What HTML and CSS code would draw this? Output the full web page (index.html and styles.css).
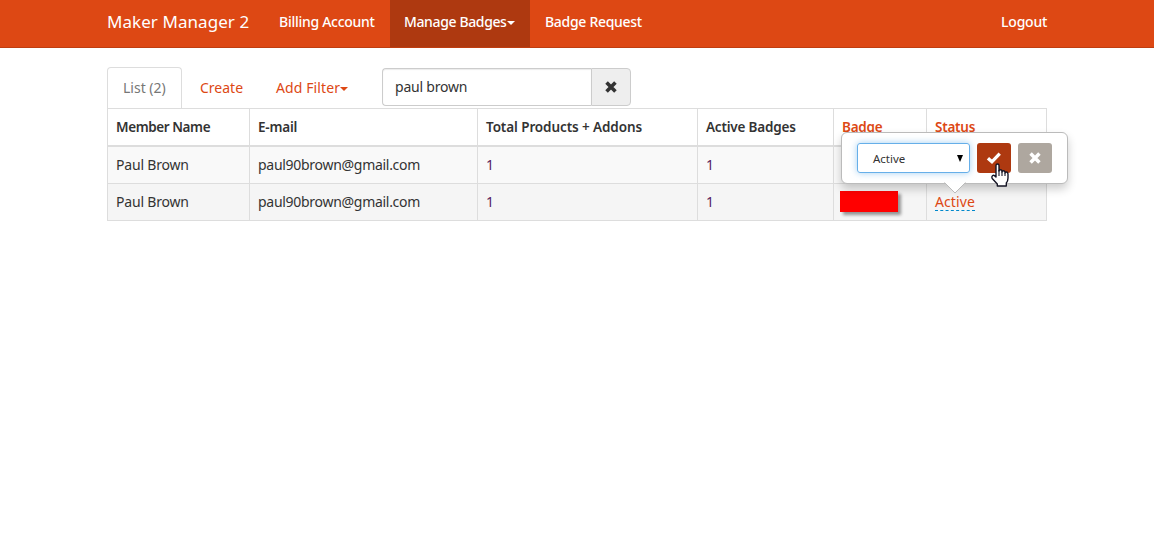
FILE: index.html
```html
<!DOCTYPE html>
<html lang="en">
<head>
<meta charset="utf-8">
<title>Maker Manager 2</title>
<link rel="stylesheet" href="styles.css">
</head>
<body>
<nav class="navbar">
  <div class="container nav-row">
    <a class="brand"><span class="t-brand">Maker Manager 2</span></a>
    <a class="nav-item billing"><span class="t-billing">Billing Account</span></a>
    <a class="nav-item active"><span class="t-manage">Manage Badges</span><i class="caret"></i></a>
    <a class="nav-item"><span class="t-request">Badge Request</span></a>
    <a class="nav-item logout"><span class="t-logout">Logout</span></a>
  </div>
</nav>
<main class="container">
  <div class="tabs">
    <a class="tab current"><span class="t-list">List (2)</span></a>
    <a class="tab create"><span class="t-create">Create</span></a>
    <a class="tab filter"><span class="t-filter">Add Filter</span><i class="caret"></i></a>
    <div class="search">
      <div class="search-input"><span class="t-search">paul brown</span></div>
      <div class="search-clear"><svg width="14" height="14" viewBox="0 0 12 12"><path d="M2.2 2.2 9.8 9.8M9.8 2.2 2.2 9.8" stroke="#333" stroke-width="3.1"/></svg></div>
    </div>
  </div>
  <table class="grid">
    <colgroup><col class="c1"><col class="c2"><col class="c3"><col class="c4"><col class="c5"><col class="c6"></colgroup>
    <thead>
      <tr><th><span class="t-member">Member Name</span></th><th><span class="t-email">E-mail</span></th><th><span class="t-total">Total Products + Addons</span></th><th><span class="t-badges">Active Badges</span></th><th class="sort"><span class="t-badge">Badge</span></th><th class="sort"><span class="t-status">Status</span></th></tr>
    </thead>
    <tbody>
      <tr><td><span class="t-name">Paul Brown</span></td><td><span class="t-mail">paul90brown@gmail.com</span></td><td class="count">1</td><td class="count">1</td><td></td><td></td></tr>
      <tr class="hover"><td><span class="t-name">Paul Brown</span></td><td><span class="t-mail">paul90brown@gmail.com</span></td><td class="count">1</td><td class="count">1</td><td class="masked"><div class="redaction"></div></td>
        <td class="status"><a class="editable">Active</a>
          <div class="popover">
            <div class="select"><span class="t-option">Active</span><svg width="8" height="7" viewBox="0 0 8 7"><path d="M1 0H7L4 7Z"/></svg></div>
            <div class="btn ok"><svg width="16" height="14" viewBox="0 0 14 12"><path d="M1.7 6.2 5.2 9.3 12 2.2" fill="none" stroke="#fff" stroke-width="2.9"/></svg></div>
            <div class="btn cancel"><svg width="14" height="14" viewBox="0 0 12 12"><path d="M2.2 2.2 9.8 9.8M9.8 2.2 2.2 9.8" stroke="#fff" stroke-width="3"/></svg></div>
            <svg class="arrow" width="22" height="12" viewBox="0 0 22 12"><path d="M0 0H22L11 11Z" fill="#fff"/><path d="M.5 .5 11 11 21.5 .5" fill="none" stroke="#bbb"/><path d="M1 0H21" stroke="#fff" stroke-width="2"/></svg>
            <svg class="pointer" width="19" height="25" viewBox="0 0 19 25"><path d="M5 13V2.5Q5 1 6.5 1T8 2.5V8Q8 6.7 9.4 6.7T11 8V9Q11 7.8 12.4 7.8T14 9.2V10Q14 9 15.3 9T17 10.8V15Q17 18 15.3 20V23H6.3V21L1.2 15.5Q.4 13.5 1.7 12.5T5 14Z" fill="#fff" stroke="#151525" stroke-width="1.4" stroke-linejoin="round"/><path d="M8 7V13M11 8.5V13M14 10V13" stroke="#151525" stroke-width="1.1"/></svg>
          </div>
        </td></tr>
    </tbody>
  </table>
</main>
</body>
</html>
```
FILE: styles.css
```css
* { box-sizing: border-box; }
body { margin: 0; background: #fff; color: #333; font: 14px/20px "Noto Sans", "Open Sans", sans-serif; }
svg { display: block; }
span, .editable { white-space: nowrap; }
.container { width: 940px; margin: 0 auto; }
.navbar { height: 48px; background: #dd4814; border-bottom: 1px solid #bf3e11; color: #fff; }
.nav-row { display: flex; height: 47px; }
.brand { width: 157px; padding-top: 12px; font-size: 17px; }
.nav-item { padding: 12px 15px 0; font-weight: 500; white-space: nowrap; }
.billing { width: 126px; }
.nav-item.active { width: 140px; padding: 12px 14px 0; background: #ae3910; }
.nav-item.logout { width: 61px; margin-left: auto; padding-right: 0; }
.caret { display: inline-block; border: 4px solid transparent; border-top-color: currentColor; border-bottom: 0; vertical-align: middle; }
.tabs { display: flex; margin-top: 19px; height: 41px; }
.tab { color: #dd4814; padding-top: 11px; white-space: nowrap; }
.current { width: 75px; border: 1px solid #ddd; border-bottom: 0; border-radius: 4px 4px 0 0; color: #777; padding: 10px 0 0 15px; }
.create { width: 76px; padding-left: 18px; }
.filter { width: 124px; padding-left: 18px; }
.search { display: flex; width: 249px; height: 38px; margin-top: 1px; }
.search-input { width: 209px; border: 1px solid #ccc; border-right: 0; border-radius: 4px 0 0 4px; padding: 8px 12px; box-shadow: inset 0 1px 1px rgba(0,0,0,.08); }
.search-clear { width: 40px; border: 1px solid #ccc; border-radius: 0 4px 4px 0; background: #eee; display: grid; place-items: center; }
.grid { width: 940px; table-layout: fixed; border-collapse: separate; border-spacing: 0; border: solid #ddd; border-width: 1px 0 0 1px; }
.c1 { width: 142px; } .c2 { width: 228px; } .c3 { width: 220px; } .c4 { width: 136px; } .c5 { width: 93px; } .c6 { width: 120px; }
th, td { height: 37px; padding: 0 8px; text-align: left; border: solid #ddd; border-width: 0 1px 1px 0; }
th { height: 38px; border-bottom-width: 2px; font-size: 13.5px; font-weight: 600; }
td { background: #f9f9f9; }
.hover td { background: #f5f5f5; }
.sort { color: #dd4814; }
.count { color: #582060; }
.masked { padding: 0 6px; }
.redaction { width: 58px; height: 21px; margin-top: -2px; background: #f00; box-shadow: 3px 3px 3px rgba(0,0,0,.4); }
.status { position: relative; }
.editable { color: #dd4814; display: inline-block; line-height: 17px; letter-spacing: .1px; border-bottom: 1px dashed #08c; }
.popover { position: absolute; left: -86px; top: -52px; width: 227px; height: 52px; display: flex; gap: 7px; padding: 10px 15px; border: 1px solid #bbb; border-radius: 6px; background: #fff; box-shadow: 0 5px 10px rgba(0,0,0,.2); }
.select { width: 113px; height: 30px; border: 1px solid #66afe9; border-radius: 3px; box-shadow: 0 0 7px rgba(102,175,233,.6); display: flex; align-items: center; justify-content: space-between; padding: 1px 5px 0 15px; font-size: 11.5px; }
.btn { width: 34px; height: 30px; border-radius: 3px; display: grid; place-items: center; }
.ok { background: #ae3910; } .cancel { background: #aea79f; }
.arrow { position: absolute; left: 102px; top: 49px; }
.pointer { position: absolute; left: 149px; top: 30px; }
.t-brand { letter-spacing: .06px; }
.t-billing { letter-spacing: -.27px; }
.t-manage { letter-spacing: -.37px; }
.t-request { letter-spacing: -.3px; }
.t-logout { letter-spacing: -.2px; }
.t-filter { letter-spacing: .1px; }
.t-search, .t-name { letter-spacing: -.2px; }
.t-mail { letter-spacing: -.29px; }
.t-member { letter-spacing: -.4px; }
.t-email { letter-spacing: -.2px; }
.t-total { letter-spacing: -.1px; }
.t-badges { letter-spacing: -.2px; }
.t-badge, .t-status { letter-spacing: -.25px; }
```
